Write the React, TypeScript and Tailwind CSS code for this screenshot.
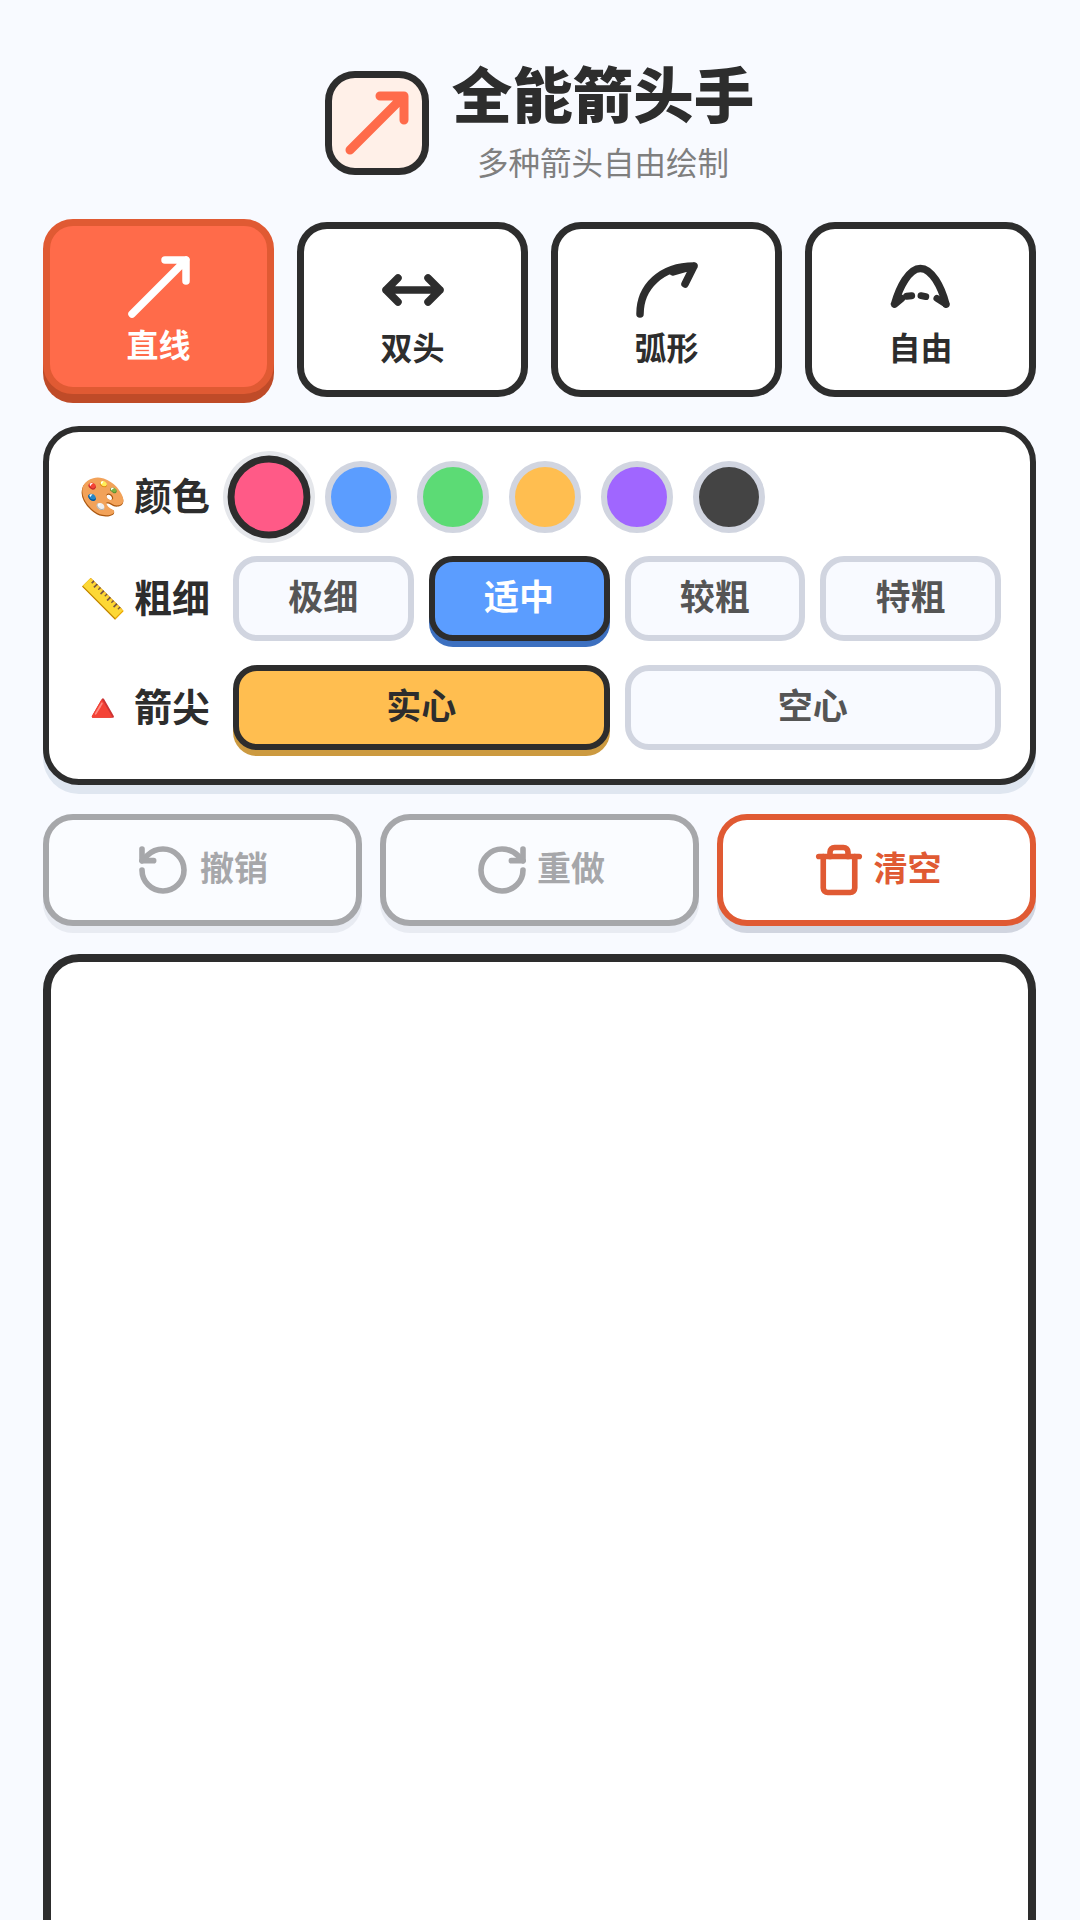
import { RotateCcw, RotateCw, Trash } from "lucide-react";

type ModeIconProps = {
  mode: "line" | "double" | "arc" | "free";
};

function ModeIcon({ mode }: ModeIconProps) {
  return (
    <svg
      viewBox="0 0 24 24"
      fill="none"
      stroke="currentColor"
      strokeWidth={2.5}
      strokeLinecap="round"
      strokeLinejoin="round"
      className="h-[72px] w-[72px]"
    >
      {mode === "line" && <path d="M3 21L21 3M14 3h7v7" />}
      {mode === "double" && <path d="M3 12h18M7 8l-4 4 4 4M17 8l4 4-4 4" />}
      {mode === "arc" && <path d="M3 20C3 11 10 4 21 4M18 10l3-6-7 2" />}
      {mode === "free" && (
        <>
          <path d="M3.2 16.7C4.8 11 8 4.8 11.8 4.8S18.8 11 20.3 16.7M3.2 16.7L5.5 14.8" />
          <path d="M7.2 14.1L8.9 13.9M12 13.9L13.6 14.2M17.3 14.8L20.3 16.7" strokeWidth={2.3} />
        </>
      )}
    </svg>
  );
}

const modes = [
  { id: "line", label: "直线" },
  { id: "double", label: "双头" },
  { id: "arc", label: "弧形" },
  { id: "free", label: "自由" },
] as const;

const swatches = ["bg-[#FF5A87]", "bg-[#5B9DFF]", "bg-[#5CDB75]", "bg-[#FFBE50]", "bg-[#A066FF]", "bg-[#444444]"];

function RowLabel({ emoji, text }: { emoji: string; text: string }) {
  return (
    <div className="flex w-[155px] shrink-0 items-center gap-[8px] pb-[6px]">
      <span className="w-[48px] text-center text-[38px] leading-none">{emoji}</span>
      <span className="text-[38px] leading-none font-bold whitespace-nowrap text-[#2D2D2D]">{text}</span>
    </div>
  );
}

export default function App() {
  return (
    <div className="flex h-[1920px] flex-col overflow-hidden bg-[#F8FAFF] pr-[44px] pl-[43px] font-['Noto_Sans_CJK_SC',sans-serif] text-[#2D2D2D]">
      <header className="flex h-[222px] shrink-0 items-start justify-center gap-[23px] pt-[48px]">
        <div className="mt-[23px] flex h-[104px] w-[104px] items-center justify-center rounded-[30px] border-[7px] border-[#2D2D2D] bg-[#FFF0E8] text-[#FF6B4A]">
          <svg
            viewBox="0 0 24 24"
            fill="none"
            stroke="currentColor"
            strokeWidth={3}
            strokeLinecap="round"
            strokeLinejoin="round"
            className="h-[72px] w-[72px]"
          >
            <path d="M3 21L21 3M13 3h8v8" />
          </svg>
        </div>
        <div className="flex flex-col items-center">
          <h1 className="text-[60.5px] leading-[87px] font-black">全能箭头手</h1>
          <p className="mt-[2px] text-[31.5px] leading-[48px] text-[#7F7F7F]">多种箭头自由绘制</p>
        </div>
      </header>

      <div className="grid shrink-0 grid-cols-4 gap-[23px]">
        {modes.map((m, i) => (
          <button
            key={m.id}
            className={
              i === 0
                ? "flex h-[175px] -translate-y-[3px] flex-col items-center rounded-[30px] border-[7px] border-[#E05A33] bg-[#FF6B4A] pt-[25px] text-white shadow-[0_9px_0_#BF4B28]"
                : "flex h-[175px] flex-col items-center rounded-[30px] border-[7px] border-[#2D2D2D] bg-white pt-[25px] text-[#2D2D2D]"
            }
          >
            <ModeIcon mode={m.id} />
            <span className="-mt-[2px] text-[32px] leading-[44px] font-bold">{m.label}</span>
          </button>
        ))}
      </div>

      <section className="mt-[29px] flex shrink-0 flex-col gap-[24px] rounded-[36px] border-[6px] border-[#2D2D2D] bg-white p-[29px] shadow-[0_9px_0_#DFE6F0]">
        <div className="-mb-[1px] flex items-center">
          <RowLabel emoji="🎨" text="颜色" />
          <div className="flex gap-[20px]">
            {swatches.map((color, i) => (
              <div
                key={color}
                className={
                  i === 0
                    ? `h-[72px] w-[72px] scale-[1.15] rounded-full border-[6px] border-[#2D2D2D] shadow-[0_0_0_4px_#E5E7EB] ${color}`
                    : `h-[72px] w-[72px] rounded-full border-[6px] border-[#D1D5E0] ${color}`
                }
              />
            ))}
          </div>
        </div>

        <div className="flex items-center">
          <RowLabel emoji="📏" text="粗细" />
          <div className="grid flex-1 grid-cols-4 gap-[15px]">
            {["极细", "适中", "较粗", "特粗"].map((t, i) => (
              <button
                key={t}
                className={
                  i === 1
                    ? "h-[85px] rounded-[24px] border-[6px] border-[#2D2D2D] bg-[#5B9DFF] pb-[7px] text-[35px] font-bold text-white shadow-[0_6px_0_#3D70C0]"
                    : "h-[85px] rounded-[24px] border-[6px] border-[#D1D5E0] bg-[#F8FAFF] pb-[7px] text-[35px] font-bold text-[#555555]"
                }
              >
                {t}
              </button>
            ))}
          </div>
        </div>

        <div className="flex items-center">
          <RowLabel emoji="🔺" text="箭尖" />
          <div className="grid flex-1 grid-cols-2 gap-[15px]">
            <button className="h-[85px] rounded-[24px] border-[6px] border-[#2D2D2D] bg-[#FFBE50] pb-[7px] text-[35px] font-bold shadow-[0_6px_0_#CC9A40]">
              实心
            </button>
            <button className="h-[85px] rounded-[24px] border-[6px] border-[#D1D5E0] bg-[#F8FAFF] pb-[7px] text-[35px] font-bold text-[#555555]">
              空心
            </button>
          </div>
        </div>
      </section>

      <div className="mt-[29px] grid shrink-0 grid-cols-3 gap-[18px]">
        <button className="flex h-[112px] items-center justify-center gap-[9px] rounded-[30px] border-[6px] border-[#2D2D2D] bg-white pr-[2px] text-[34px] font-bold opacity-40 shadow-[0_7px_0_#D1D5E0]">
          <RotateCcw size={56} strokeWidth={2.4} />
          <span className="pb-[7px]">撤销</span>
        </button>
        <button className="flex h-[112px] items-center justify-center gap-[7px] rounded-[30px] border-[6px] border-[#2D2D2D] bg-white text-[34px] font-bold opacity-40 shadow-[0_7px_0_#D1D5E0]">
          <RotateCw size={56} strokeWidth={2.4} />
          <span className="pb-[7px]">重做</span>
        </button>
        <button className="flex h-[112px] items-center justify-center gap-[8px] rounded-[30px] border-[6px] border-[#E05A33] bg-white text-[34px] font-bold text-[#E05A33] shadow-[0_7px_0_#D1D5E0]">
          <Trash size={54} strokeWidth={2.5} />
          <span className="pb-[7px]">清空</span>
        </button>
      </div>

      <div className="mt-[28px] h-[1100px] shrink-0 rounded-[36px] border-[8px] border-[#2D2D2D] bg-white" />
    </div>
  );
}
